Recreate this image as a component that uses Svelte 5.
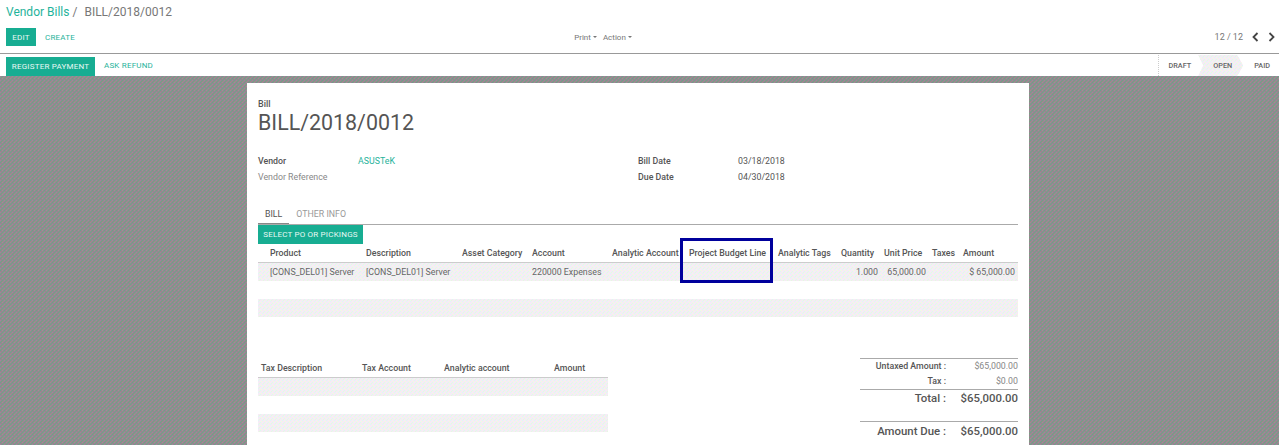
<script>
  const columns = ['Product', 'Description', 'Asset Category', 'Account', 'Analytic Account', 'Project Budget Line', 'Analytic Tags', 'Quantity', 'Unit Price', 'Taxes', 'Amount'];
  const line = ['[CONS_DEL01] Server', '[CONS_DEL01] Server', '', '220000 Expenses', '', '', '', '1.000', '65,000.00', '', '$ 65,000.00'];
  const taxColumns = ['Tax Description', 'Tax Account', 'Analytic account', 'Amount'];
</script>

<div class="page">
  <header class="control">
    <div class="crumbs"><span class="link">Vendor Bills</span><span class="sep">/</span><span>BILL/2018/0012</span></div>
    <div class="actions">
      <div class="left">
        <button class="primary edit">EDIT</button>
        <span class="link small create">CREATE</span>
      </div>
      <div class="center">
        <span>Print<i class="caret"></i></span>
        <span>Action<i class="caret"></i></span>
      </div>
      <div class="pager">
        <span>12 / 12</span>
        <svg width="9" height="10" viewBox="0 0 9 10"><path d="M6.5 1 2.5 5l4 4" /></svg>
        <svg width="9" height="10" viewBox="0 0 9 10"><path d="M2.5 1l4 4-4 4" /></svg>
      </div>
    </div>
  </header>

  <div class="statusbar">
    <div class="left">
      <button class="primary register">REGISTER PAYMENT</button>
      <span class="link small refund">ASK REFUND</span>
    </div>
    <div class="steps">
      <span class="step draft">DRAFT</span>
      <span class="step open stripe">OPEN</span>
      <span class="step paid">PAID</span>
    </div>
  </div>

  <main class="backdrop">
    <section class="sheet">
      <div class="label">Bill</div>
      <h1>BILL/2018/0012</h1>

      <div class="fields">
        <div class="group">
          <div class="field"><b>Vendor</b><span class="link">ASUSTeK</span></div>
          <div class="field"><span class="muted">Vendor Reference</span></div>
        </div>
        <div class="group">
          <div class="field"><b>Bill Date</b><span>03/18/2018</span></div>
          <div class="field"><b>Due Date</b><span>04/30/2018</span></div>
        </div>
      </div>

      <nav class="tabs">
        <span class="tab active">BILL</span>
        <span class="tab">OTHER INFO</span>
      </nav>
      <button class="primary select">SELECT PO OR PICKINGS</button>

      <div class="lines">
        <div class="row head">
          {#each columns as col}<span>{col}</span>{/each}
        </div>
        <div class="row stripe">
          {#each line as cell, i}<span class:num={i === 7 || i === 8 || i === 10}>{cell}</span>{/each}
        </div>
        <div class="row"></div>
        <div class="row stripe"></div>
        <div class="highlight"></div>
      </div>

      <div class="bottom">
        <div class="taxes">
          <div class="taxrow head">
            {#each taxColumns as col}<span>{col}</span>{/each}
          </div>
          <div class="taxrow stripe"></div>
          <div class="taxrow"></div>
          <div class="taxrow stripe"></div>
        </div>
        <div class="totals">
          <div class="total untaxed"><b>Untaxed Amount :</b><span>$65,000.00</span></div>
          <div class="total tax"><b>Tax :</b><span>$0.00</span></div>
          <div class="total big grand"><b>Total :</b><b>$65,000.00</b></div>
          <div class="total big due"><b>Amount Due :</b><b>$65,000.00</b></div>
        </div>
      </div>
    </section>
  </main>
</div>

<style>
  :global(body) {
    margin: 0;
    background: #fff;
  }

  .page {
    height: 445px;
    overflow: hidden;
    display: flex;
    flex-direction: column;
    font-family: Roboto, "Liberation Sans", sans-serif;
    font-size: 9px;
    color: #555;
  }

  .control {
    flex: none;
    height: 54px;
    padding: 0 3px 0 6px;
    box-sizing: border-box;
    border-bottom: 1px solid #999;
  }

  .crumbs {
    height: 28px;
    padding-top: 4px;
    box-sizing: border-box;
    font-size: 12px;
    line-height: 17px;
    color: #777;
  }

  .sep {
    margin: 0 7px 0 3px;
  }

  .link {
    color: #1fb39b;
  }

  .small {
    font-size: 8px;
    letter-spacing: 0.2px;
  }

  .actions {
    display: grid;
    grid-template-columns: 1fr 1fr 1fr;
    align-items: center;
    height: 18px;
  }

  .left {
    display: flex;
    align-items: center;
  }

  button.primary {
    border: 0;
    padding: 0;
    background: #17ad92;
    color: #e8f8f4;
    font-family: inherit;
    font-size: 8px;
    letter-spacing: 0.2px;
  }

  .edit {
    width: 30px;
    height: 18px;
  }

  .create {
    margin-left: 9px;
  }

  .center {
    display: flex;
    justify-content: center;
    gap: 6px;
    font-size: 8px;
    color: #777;
    padding-right: 76px;
  }

  .caret {
    display: inline-block;
    margin-left: 2px;
    vertical-align: middle;
    border: 2px solid transparent;
    border-top-color: #777;
    border-bottom: 0;
  }

  .pager {
    display: flex;
    justify-content: flex-end;
    align-items: center;
    gap: 7.5px;
    font-size: 9px;
    color: #777;
  }

  .pager svg {
    fill: none;
    stroke: #444;
    stroke-width: 1.8;
  }

  .statusbar {
    flex: none;
    height: 22px;
    display: flex;
    justify-content: space-between;
    padding-left: 6px;
    box-sizing: border-box;
  }

  .register {
    width: 89px;
    height: 19px;
    margin-top: 2px;
  }

  .refund {
    margin-left: 9px;
  }

  .steps {
    display: flex;
    height: 21px;
    margin-top: 1px;
    border-left: 1px dotted #ccc;
    font-size: 7.3px;
    font-weight: 500;
    align-items: center;
  }

  .step {
    height: 100%;
    display: flex;
    align-items: center;
    color: #666;
  }

  .draft {
    padding: 0 7px 0 10px;
  }

  .paid {
    padding: 0 9px 0 11px;
  }

  .open {
    padding: 0 11px 0 15px;
    clip-path: polygon(0 0, calc(100% - 6px) 0, 100% 50%, calc(100% - 6px) 100%, 0 100%, 5px 50%);
  }

  .backdrop {
    flex: 1;
    padding-top: 7px;
    display: flex;
    justify-content: center;
    background: #8e8e8e url("data:image/svg+xml,%3Csvg xmlns='http://www.w3.org/2000/svg' width='4' height='4' shape-rendering='crispEdges'%3E%3Crect x='0' y='0' width='1' height='1' fill='%23a67fa0'/%3E%3Crect x='2' y='0' width='1' height='1' fill='%236fa08c'/%3E%3Crect x='1' y='1' width='1' height='1' fill='%2378a07e'/%3E%3Crect x='3' y='1' width='1' height='1' fill='%23a68290'/%3E%3Crect x='0' y='2' width='1' height='1' fill='%236f9c8c'/%3E%3Crect x='2' y='2' width='1' height='1' fill='%23aa8498'/%3E%3Crect x='1' y='3' width='1' height='1' fill='%23a07c92'/%3E%3Crect x='3' y='3' width='1' height='1' fill='%2374a286'/%3E%3C/svg%3E") 0 0 / 4px 4px;
  }

  .sheet {
    flex: none;
    width: 782px;
    height: 400px;
    margin-right: 3px;
    padding: 16px 11px 0;
    box-sizing: border-box;
    background: #fff;
  }

  .label {
    font-size: 9px;
    line-height: 11px;
    font-weight: 500;
    color: #555;
  }

  h1 {
    margin: -1px 0 0;
    font-size: 21.4px;
    font-weight: 400;
    line-height: 28px;
    color: #555;
  }

  .fields {
    display: grid;
    grid-template-columns: 380px 1fr;
    margin-top: 16px;
    font-size: 8.8px;
  }

  .field {
    display: flex;
    height: 16px;
    align-items: center;
    color: #555;
  }

  .field b {
    font-weight: 500;
    width: 100px;
  }

  .muted {
    color: #888;
  }

  .tabs {
    display: flex;
    margin-top: 20px;
    height: 19px;
    border-bottom: 1px solid #aaa;
    font-size: 8.8px;
  }

  .tab {
    padding: 4px 7px 0;
    color: #999;
  }

  .tab.active {
    color: #555;
    border-bottom: 1px solid #888;
    height: 14px;
  }

  .select {
    display: block;
    width: 105px;
    height: 19px;
    letter-spacing: 0;
  }

  .lines {
    position: relative;
  }

  .row {
    display: grid;
    grid-template-columns: 104px 96px 70px 80px 77px 89px 63px 43px 48px 31px 1fr;
    height: 18px;
    align-items: center;
    font-size: 8.8px;
    color: #666;
  }

  .row span {
    white-space: nowrap;
    padding-left: 4px;
  }

  .row span:first-child {
    padding-left: 12px;
  }

  .row .num {
    text-align: right;
    padding-right: 2px;
  }

  .row .num:last-child {
    padding-right: 3px;
  }

  .row.head {
    font-weight: 500;
    border-bottom: 1px solid #ccc;
    color: #555;
  }

  .stripe {
    background: #f1f1f1 url("data:image/svg+xml,%3Csvg xmlns='http://www.w3.org/2000/svg' width='4' height='4' shape-rendering='crispEdges'%3E%3Crect x='0' y='0' width='1' height='1' fill='%23fbe6fb'/%3E%3Crect x='2' y='0' width='1' height='1' fill='%23e0f7f0'/%3E%3Crect x='1' y='1' width='1' height='1' fill='%23e6f8e2'/%3E%3Crect x='3' y='1' width='1' height='1' fill='%23f8e8f6'/%3E%3Crect x='0' y='2' width='1' height='1' fill='%23e0f4fa'/%3E%3Crect x='2' y='2' width='1' height='1' fill='%23fbe8f8'/%3E%3Crect x='1' y='3' width='1' height='1' fill='%23f8e6fa'/%3E%3Crect x='3' y='3' width='1' height='1' fill='%23f8f8dc'/%3E%3C/svg%3E") 0 0 / 4px 4px;
  }

  .highlight {
    position: absolute;
    left: 422px;
    top: -6px;
    width: 93px;
    height: 45px;
    box-sizing: border-box;
    border: 3px solid #00009c;
  }

  .bottom {
    display: flex;
    justify-content: space-between;
    margin-top: 42px;
  }

  .taxes {
    width: 350px;
  }

  .taxrow {
    display: grid;
    grid-template-columns: 101px 82px 110px 1fr;
    height: 18px;
    align-items: center;
    font-size: 8.8px;
  }

  .taxrow.head {
    font-weight: 500;
    padding-left: 3px;
    border-bottom: 1px solid #ccc;
  }

  .totals {
    width: 158px;
    margin-top: -1px;
    font-size: 8.8px;
  }

  .total {
    display: flex;
    justify-content: flex-end;
    align-items: center;
    color: #888;
  }

  .total b {
    font-weight: 500;
    color: #555;
  }

  .total > :first-child {
    flex: 1;
    text-align: right;
    margin-right: 14px;
  }

  .total > :last-child {
    width: 58px;
    text-align: right;
    white-space: nowrap;
  }

  .untaxed {
    height: 14px;
    border-top: 1px solid #aaa;
  }

  .tax {
    height: 16px;
    border-bottom: 1px solid #aaa;
  }

  .big {
    font-size: 11.4px;
  }

  .grand {
    height: 15px;
  }

  .due {
    height: 17px;
    margin-top: 16px;
    border-top: 1px solid #aaa;
  }
</style>
